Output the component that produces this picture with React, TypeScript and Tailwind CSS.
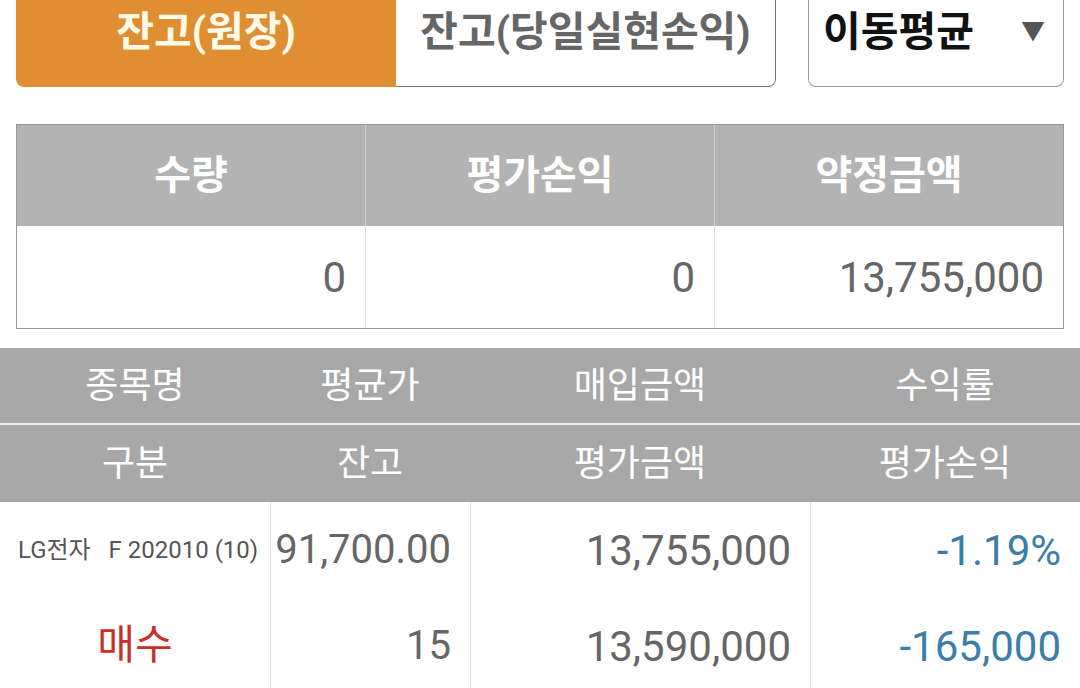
import { useState } from "react"

export default function App() {
  const [mode] = useState("이동평균")

  // summary numbers
  const summary = [
    { label: "수량", value: "0" },
    { label: "평가손익", value: "0" },
    { label: "약정금액", value: "13,755,000" },
  ]

  const cols = ["w-[270px]", "w-[200px]", "w-[340px]", "flex-1"]

  return (
    <div className="w-[1080px] h-[688px] overflow-hidden bg-white font-['Roboto','Noto_Sans_CJK_KR',sans-serif]">
      {/* Tabs */}
      <div className="flex px-4 h-[87px]">
        <div className="w-[380px] bg-[#e08e32] rounded-bl-[8px] flex justify-center pt-[8px]">
          <span className="text-[41px] leading-[48px] font-bold text-[#fff9e8]">잔고(원장)</span>
        </div>
        <div className="w-[380px] border border-t-0 border-l-0 border-[#777] rounded-br-[8px] flex justify-center pt-[8px]">
          <span className="text-[41px] leading-[48px] font-bold text-[#666]">잔고(당일실현손익)</span>
        </div>
        <div className="ml-8 w-[256px] border border-t-0 border-[#999] rounded-b-[8px] flex items-start justify-between pl-[14px] pr-[18px] pt-[8px]">
          <span className="text-[41px] leading-[48px] font-bold text-[#111]">{mode}</span>
          <span className="text-[24px] leading-[48px] text-[#555]">▼</span>
        </div>
      </div>

      {/* Summary */}
      <div className="mx-4 mt-[37px] border border-[#999] flex flex-col">
        <div className="flex h-[101px] bg-[#b3b3b3]">
          {summary.map((s, i) => (
            <div
              key={s.label}
              className={`flex-1 flex items-center justify-center ${i > 0 ? "border-l border-[#d0d0d0]" : ""}`}
            >
              <span className="text-[40px] font-bold text-white">{s.label}</span>
            </div>
          ))}
        </div>
        <div className="flex h-[102px] bg-white">
          {summary.map((s, i) => (
            <div
              key={s.label}
              className={`flex-1 flex items-center justify-end pr-[19px] ${i > 0 ? "border-l border-[#ddd]" : ""}`}
            >
              <span className="text-[42px] text-[#666]">{s.value}</span>
            </div>
          ))}
        </div>
      </div>

      {/* Detail table */}
      <div className="mt-[19px] flex flex-col">
        <div className="bg-[#a8a8a8]">
          <div className="flex h-[77px] items-center text-[36px] text-white border-b-2 border-[#e8e8e8]">
            <div className={`${cols[0]} text-center`}>종목명</div>
            <div className={`${cols[1]} text-center`}>평균가</div>
            <div className={`${cols[2]} text-center`}>매입금액</div>
            <div className={`${cols[3]} text-center`}>수익률</div>
          </div>
          <div className="flex h-[77px] items-center text-[36px] text-white">
            <div className={`${cols[0]} text-center`}>구분</div>
            <div className={`${cols[1]} text-center`}>잔고</div>
            <div className={`${cols[2]} text-center`}>평가금액</div>
            <div className={`${cols[3]} text-center`}>평가손익</div>
          </div>
        </div>

        <div className="flex">
          <div className={`${cols[0]} flex flex-col`}>
            <div className="h-[96px] flex items-center pl-[18px] text-[24px] text-[#555] whitespace-nowrap">
              LG전자&nbsp;&nbsp;&nbsp;F 202010 (10)
            </div>
            <div className="h-[96px] flex items-center justify-center text-[41px] text-[#c8302c]">매수</div>
          </div>
          <div className={`${cols[1]} flex flex-col border-l border-[#e0e0e0]`}>
            <div className="h-[96px] flex items-center justify-end pr-[19px] text-[40px] text-[#666]">91,700.00</div>
            <div className="h-[96px] flex items-center justify-end pr-[19px] text-[40px] text-[#666]">15</div>
          </div>
          <div className={`${cols[2]} flex flex-col border-l border-[#e0e0e0]`}>
            <div className="h-[96px] flex items-center justify-end pr-[19px] text-[42px] text-[#666]">13,755,000</div>
            <div className="h-[96px] flex items-center justify-end pr-[19px] text-[42px] text-[#666]">13,590,000</div>
          </div>
          <div className={`${cols[3]} flex flex-col border-l border-[#e0e0e0]`}>
            <div className="h-[96px] flex items-center justify-end pr-[19px] text-[42px] text-[#3b7ea8]">-1.19%</div>
            <div className="h-[96px] flex items-center justify-end pr-[19px] text-[42px] text-[#3b7ea8]">-165,000</div>
          </div>
        </div>
      </div>
    </div>
  )
}
